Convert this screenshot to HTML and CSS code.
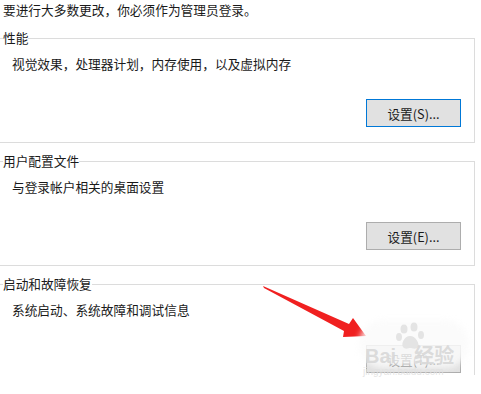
FILE: index.html
```html
<!DOCTYPE html>
<html lang="zh-CN">
<head>
    <meta charset="UTF-8">
    <title>系统属性 - 高级</title>
    <link rel="stylesheet" href="styles.css">
</head>
<body>
    <div class="page">
        <p class="intro">要进行大多数更改，你必须作为管理员登录。</p>

        <fieldset class="group">
            <legend>性能</legend>
            <p class="desc">视觉效果，处理器计划，内存使用，以及虚拟内存</p>
            <div class="actions">
                <button class="btn focused">设置(S)...</button>
            </div>
        </fieldset>

        <fieldset class="group">
            <legend>用户配置文件</legend>
            <p class="desc">与登录帐户相关的桌面设置</p>
            <div class="actions">
                <button class="btn">设置(E)...</button>
            </div>
        </fieldset>

        <fieldset class="group last">
            <legend>启动和故障恢复</legend>
            <p class="desc">系统启动、系统故障和调试信息</p>
            <div class="actions">
                <button class="btn">设置(T)...</button>
            </div>
        </fieldset>

        <!-- red annotation arrow -->
        <svg class="arrow" width="481" height="394" viewBox="0 0 481 394">
            <polygon points="263,286 264,288 344,331 343,337 366,336 353,318 349,324" fill="#f02020"/>
        </svg>

        <!-- baidu jingyan watermark -->
        <div class="watermark">
            <div class="cloud"></div>
            <svg class="paw" width="34" height="30" viewBox="0 0 34 30">
                <ellipse cx="9" cy="7" rx="3.5" ry="4.5" fill="#e4e4e4"/>
                <ellipse cx="19" cy="5" rx="3.5" ry="4.5" fill="#e4e4e4"/>
                <ellipse cx="4" cy="15" rx="3" ry="4" fill="#e4e4e4"/>
                <ellipse cx="26" cy="13" rx="3" ry="4" fill="#e4e4e4"/>
                <path d="M15 14 C9 14 6 22 8 25 C10 28 14 26 15 26 C17 26 21 28 23 25 C25 22 21 14 15 14 Z" fill="#e4e4e4"/>
            </svg>
            <span class="wm-text">Bai<span class="wm-gap"></span>经验</span>
            <span class="wm-url">jingyan.baidu.com</span>
        </div>
    </div>
</body>
</html>
```

FILE: styles.css
```css
/* Windows system properties, advanced tab */
body {
    margin: 0;
    background-color: #fff;
    color: #1a1a1a;
    font-family: "Noto Sans CJK SC", "Noto Sans", sans-serif;
    font-size: 12.7px;
}

.page {
    position: relative;
    height: 394px;
    overflow: hidden;
}

.intro {
    margin: 0 0 0 3px;
    line-height: 20px;
}

.group {
    margin: 10px 6px 0 -8px;
    padding: 0 0 15px 10px;
    border: 1px solid #dcdcdc;
    min-width: 0;
}

.group legend {
    padding: 0;
    line-height: 16px;
}

.group.last {
    border-bottom: none;
    padding-bottom: 2px;
}

.desc {
    margin: 8px 0 0 9px;
    line-height: 20px;
}

.actions {
    display: flex;
    justify-content: flex-end;
    padding-right: 13px;
    margin-top: 25px;
}

.btn {
    width: 95px;
    height: 28px;
    background-color: #e1e1e1;
    border: 1px solid #adadad;
    font-family: inherit;
    font-size: 12.7px;
    color: #1a1a1a;
    padding: 0;
}

.btn.focused {
    border-color: #0078d7;
}

.arrow {
    position: absolute;
    left: 0;
    top: 0;
}

.watermark {
    position: absolute;
    left: 355px;
    top: 318px;
    width: 120px;
    height: 60px;
}

.cloud {
    position: absolute;
    left: 4px;
    top: 2px;
    width: 110px;
    height: 48px;
    border-radius: 24px;
    background-color: rgba(250, 250, 250, 0.85);
    filter: blur(3px);
}

.paw {
    position: absolute;
    left: 40px;
    top: 4px;
}

.wm-text {
    position: absolute;
    left: 10px;
    top: 27px;
    font-family: "Liberation Sans", "Noto Sans CJK SC", sans-serif;
    font-size: 20px;
    font-weight: bold;
    color: rgba(215, 215, 215, 0.9);
    line-height: 22px;
    white-space: nowrap;
}

.wm-gap {
    display: inline-block;
    width: 18px;
}

.wm-url {
    position: absolute;
    left: 8px;
    top: 48px;
    font-family: "Liberation Sans", sans-serif;
    font-size: 10px;
    color: rgba(225, 225, 225, 0.9);
    white-space: nowrap;
}
```
